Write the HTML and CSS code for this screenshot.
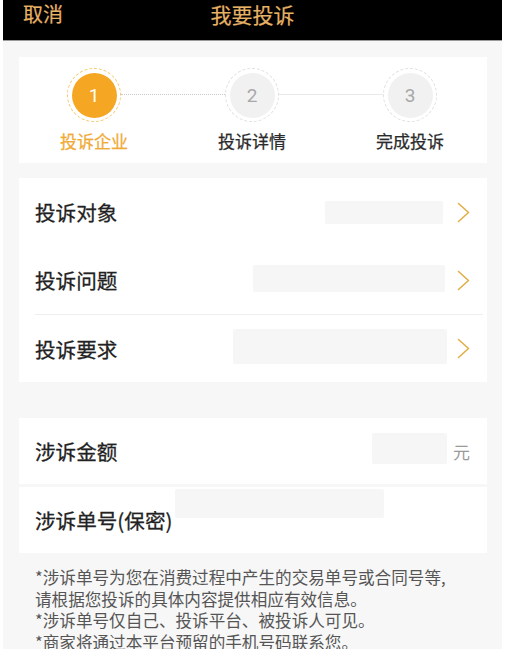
FILE: index.html
```html
<!DOCTYPE html>
<html lang="zh-CN">
<head>
<meta charset="utf-8">
<title>我要投诉</title>
<link rel="stylesheet" href="styles.css">
</head>
<body>
<div class="page">
  <header class="header">
    <span class="cancel">取消</span>
    <span class="title">我要投诉</span>
    <span></span>
  </header>
  <main class="main">
    <section class="card steps">
      <div class="step active">
        <div class="ring"><div class="dot">1</div></div>
        <div class="step-label">投诉企业</div>
      </div>
      <div class="connector dotted"></div>
      <div class="step">
        <div class="ring"><div class="dot">2</div></div>
        <div class="step-label">投诉详情</div>
      </div>
      <div class="connector solid"></div>
      <div class="step">
        <div class="ring"><div class="dot">3</div></div>
        <div class="step-label">完成投诉</div>
      </div>
    </section>

    <section class="card list">
      <div class="row">
        <span class="label">投诉对象</span>
        <span class="ph ph-1"></span>
        <svg class="chev" width="13" height="21" viewBox="0 0 13 21"><polyline points="1.5,1.5 11.5,10.5 1.5,19.5" fill="none" stroke="#e2ae47" stroke-width="1.6" stroke-linecap="round" stroke-linejoin="round"/></svg>
      </div>
      <div class="row">
        <span class="label">投诉问题</span>
        <span class="ph ph-2"></span>
        <svg class="chev" width="13" height="21" viewBox="0 0 13 21"><polyline points="1.5,1.5 11.5,10.5 1.5,19.5" fill="none" stroke="#e2ae47" stroke-width="1.6" stroke-linecap="round" stroke-linejoin="round"/></svg>
      </div>
      <div class="divider"></div>
      <div class="row row-last">
        <span class="label">投诉要求</span>
        <span class="ph ph-3"></span>
        <svg class="chev" width="13" height="21" viewBox="0 0 13 21"><polyline points="1.5,1.5 11.5,10.5 1.5,19.5" fill="none" stroke="#e2ae47" stroke-width="1.6" stroke-linecap="round" stroke-linejoin="round"/></svg>
      </div>
    </section>

    <section class="group">
      <div class="row row-amount">
        <span class="label">涉诉金额</span>
        <span class="ph ph-amount"></span>
        <span class="unit">元</span>
      </div>
      <div class="row row-order">
        <span class="label">涉诉单号(保密)</span>
        <span class="ph ph-order"></span>
      </div>
    </section>

    <div class="notes">
      <p>*涉诉单号为您在消费过程中产生的交易单号或合同号等,</p>
      <p>请根据您投诉的具体内容提供相应有效信息。</p>
      <p>*涉诉单号仅自己、投诉平台、被投诉人可见。</p>
      <p>*商家将通过本平台预留的手机号码联系您。</p>
    </div>
  </main>
</div>
</body>
</html>
```

FILE: styles.css
```css
* { box-sizing: border-box; }
html, body { margin: 0; padding: 0; background: #fff; }
body {
  font-family: "Noto Sans CJK SC", "Noto Sans", sans-serif;
  color: #222;
}
.page {
  margin: 0 3px;
  width: 499px;
  min-height: 649px;
  background: #f7f7f7;
  overflow: hidden;
}
.header {
  height: 41px;
  background: #000;
  border-bottom: 1px solid #9a9a9a;
  display: grid;
  grid-template-columns: 1fr auto 1fr;
  align-items: start;
  padding: 2px 20px 0 20px;
  color: #e6b266;
}
.cancel { font-size: 20px; line-height: 24px; -webkit-text-stroke: 0.2px #e6b266; }
.title { font-size: 21px; line-height: 24px; -webkit-text-stroke: 0.2px #e6b266; }

.main { padding: 16px 15px 0 16px; }

.card { background: #fff; }

.steps {
  height: 106px;
  display: flex;
  align-items: flex-start;
  padding: 11px 50px 0 48px;
}
.step {
  width: 54px;
  display: flex;
  flex-direction: column;
  align-items: center;
}
.ring {
  width: 54px;
  height: 54px;
  border-radius: 50%;
  border: 1.5px dashed #dedede;
  display: flex;
  align-items: center;
  justify-content: center;
  background: #fff;
}
.dot {
  width: 45px;
  height: 45px;
  border-radius: 50%;
  background: #f1f1f1;
  color: #a8a8a8;
  font-family: Roboto, "Noto Sans", sans-serif;
  font-size: 19px;
  display: flex;
  align-items: center;
  justify-content: center;
}
.step.active .ring { border-color: #f5c665; }
.step.active .dot { background: #f5a623; color: #fff; }
.step-label {
  margin-top: 9px;
  font-size: 17px;
  line-height: 20px;
  white-space: nowrap;
  color: #2a2a2a;
  -webkit-text-stroke: 0.25px #2a2a2a;
}
.step.active .step-label { color: #f0aa35; -webkit-text-stroke: 0.25px #f0aa35; }
.connector {
  flex: 1;
  height: 0;
  margin-top: 26px;
}
.connector.dotted { border-top: 1px dotted #c9c9c9; }
.connector.solid { border-top: 1px solid #e9e9e9; }

.list { margin-top: 15px; }
.row {
  height: 68px;
  display: flex;
  align-items: center;
  padding: 0 17px 0 16px;
  background: #fff;
}
.row-last { height: 67px; }
.label {
  font-size: 20.6px;
  line-height: 24px;
  color: #222;
  -webkit-text-stroke: 0.28px #222;
  white-space: nowrap;
}
.ph {
  display: block;
  background: #f6f6f6;
  border-radius: 2px;
}
.ph-1 { margin-left: auto; margin-right: 14px; width: 118px; height: 23px; }
.ph-2 { margin-left: auto; margin-right: 12px; width: 192px; height: 27px; margin-top: -3px; }
.ph-3 { margin-left: auto; margin-right: 10px; width: 214px; height: 35px; margin-top: -4px; }
.chev { display: block; flex: none; }
.divider {
  height: 1px;
  background: #eeeeee;
  margin: 0 4px 0 16px;
}

.group {
  margin-top: 36px;
  display: flex;
  flex-direction: column;
  gap: 3px;
}
.row-amount { height: 66px; }
.ph-amount { margin-left: auto; width: 75px; height: 31px; margin-top: -6px; }
.unit {
  margin-left: 6px;
  font-size: 17px;
  color: #9a9a9a;
}
.row-order { height: 66px; }
.ph-order {
  align-self: flex-start;
  margin-top: 2px;
  margin-left: 3px;
  width: 209px;
  height: 29px;
}

.notes {
  margin-top: 14px;
  padding-left: 16px;
  font-size: 16.6px;
  line-height: 21.5px;
  color: #555;
}
.notes p { margin: 0; height: 21.5px; white-space: nowrap; }
```
